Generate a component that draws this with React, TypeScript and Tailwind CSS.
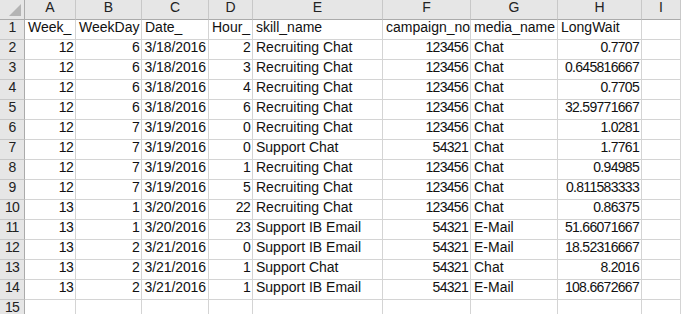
const cols = ['A', 'B', 'C', 'D', 'E', 'F', 'G', 'H', 'I'];
const widths = '25px 51px 66px 67px 44px 130px 88px 87px 84px 1fr';

type Cell = { v: string; r?: boolean; date?: boolean };

const header: Cell[] = [
  { v: 'Week_' }, { v: 'WeekDay' }, { v: 'Date_' }, { v: 'Hour_' }, { v: 'skill_name' },
  { v: 'campaign_no' }, { v: 'media_name' }, { v: 'LongWait' }, { v: '' },
];

const data: [string, string, string, string, string, string, string, string][] = [
  ['12', '6', '3/18/2016', '2', 'Recruiting Chat', '123456', 'Chat', '0.7707'],
  ['12', '6', '3/18/2016', '3', 'Recruiting Chat', '123456', 'Chat', '0.645816667'],
  ['12', '6', '3/18/2016', '4', 'Recruiting Chat', '123456', 'Chat', '0.7705'],
  ['12', '6', '3/18/2016', '6', 'Recruiting Chat', '123456', 'Chat', '32.59771667'],
  ['12', '7', '3/19/2016', '0', 'Recruiting Chat', '123456', 'Chat', '1.0281'],
  ['12', '7', '3/19/2016', '0', 'Support Chat', '54321', 'Chat', '1.7761'],
  ['12', '7', '3/19/2016', '1', 'Recruiting Chat', '123456', 'Chat', '0.94985'],
  ['12', '7', '3/19/2016', '5', 'Recruiting Chat', '123456', 'Chat', '0.811583333'],
  ['13', '1', '3/20/2016', '22', 'Recruiting Chat', '123456', 'Chat', '0.86375'],
  ['13', '1', '3/20/2016', '23', 'Support IB Email', '54321', 'E-Mail', '51.66071667'],
  ['13', '2', '3/21/2016', '0', 'Support IB Email', '54321', 'E-Mail', '18.52316667'],
  ['13', '2', '3/21/2016', '1', 'Support Chat', '54321', 'Chat', '8.2016'],
  ['13', '2', '3/21/2016', '1', 'Support IB Email', '54321', 'E-Mail', '108.6672667'],
];

// text columns are left aligned, the rest right
const textCols = [4, 6];

function rowCells(d: string[] | null): Cell[] {
  if (!d) return Array.from({ length: 9 }, () => ({ v: '' }));
  return [...d.map((v, i) => ({ v, r: !textCols.includes(i), date: i === 2 })), { v: '' }];
}

export default function App() {
  const rows: Cell[][] = [header, ...data.map((d) => rowCells(d)), rowCells(null)];

  return (
    <div
      className="w-[681px] h-[314px] overflow-hidden bg-white text-[14px] text-[#111]"
      style={{ fontFamily: '"Liberation Sans", Arial, sans-serif' }}
    >
      <div className="grid" style={{ gridTemplateColumns: widths }}>
        {/* corner */}
        <div className="relative h-[20px] bg-[#e6e6e6] border-r border-b border-[#ababab]">
          <div className="absolute right-[3px] bottom-[3px] w-0 h-0 border-l-[12px] border-l-transparent border-b-[12px] border-b-[#b4b4b4]" />
        </div>
        {cols.map((c) => (
          <div
            key={c}
            className="h-[20px] bg-[#e6e6e6] border-r border-b border-r-[#c8c8c8] border-b-[#ababab] flex items-end justify-center pb-[1px] text-[#222]"
          >
            {c}
          </div>
        ))}

        {rows.map((row, ri) => (
          <Row key={ri} n={ri + 1} cells={row} />
        ))}
      </div>
    </div>
  );
}

function Row({ n, cells }: { n: number; cells: Cell[] }) {
  return (
    <>
      <div className="h-[20px] bg-[#e6e6e6] border-r border-b border-r-[#ababab] border-b-[#c8c8c8] flex items-end justify-center pb-[1px] text-[#222] tracking-[-0.7px]">
        {n}
      </div>
      {cells.map((c, i) => (
        <div
          key={i}
          className={
            'h-[20px] border-r border-b border-[#d4d4d4] flex items-end pb-[1px] whitespace-nowrap overflow-visible ' +
            (c.date
              ? 'justify-end pr-[2px] tracking-[-0.1px]'
              : c.r
                ? 'justify-end pr-[2px] tracking-[-0.7px]'
                : 'justify-start pl-[3px]')
          }
        >
          {c.v}
        </div>
      ))}
    </>
  );
}
